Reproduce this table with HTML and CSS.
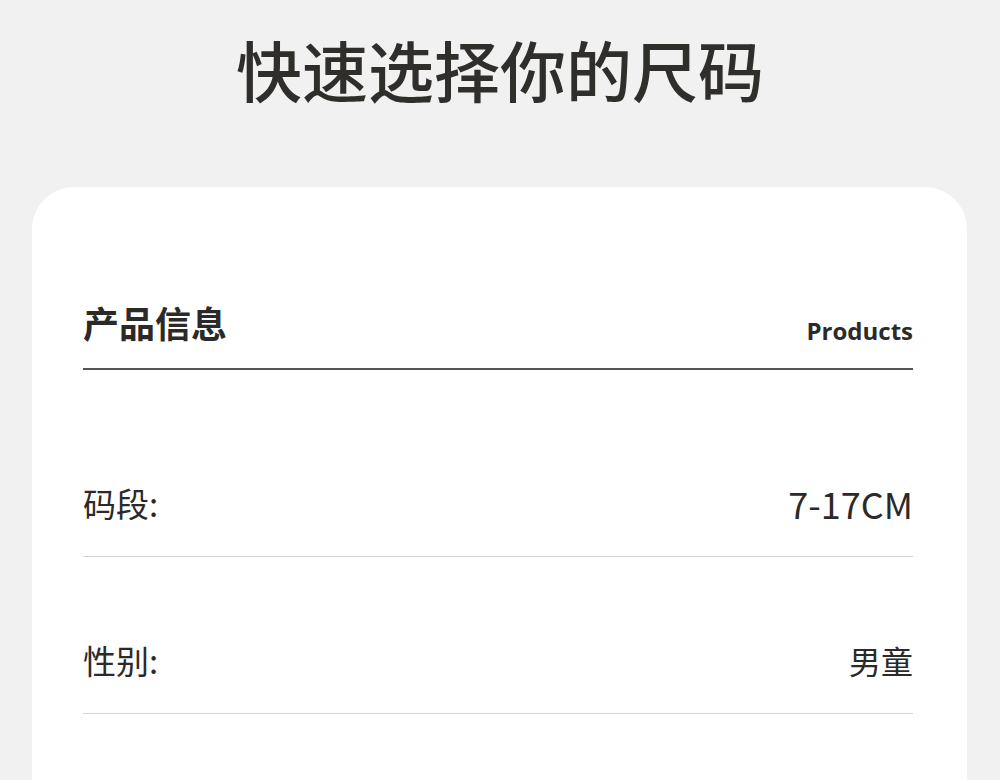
FILE: index.html
```html
<!DOCTYPE html>
<html lang="zh-CN">
<head>
<meta charset="utf-8">
<link rel="stylesheet" href="styles.css">
</head>
<body>
<h1 class="title">快速选择你的尺码</h1>
<section class="card">
  <div class="card-head">
    <h2 class="head-cn">产品信息</h2>
    <span class="head-en">Products</span>
  </div>
  <div class="rows">
    <div class="row">
      <span class="label">码段:</span>
      <span class="value value-latin">7-17CM</span>
    </div>
    <div class="row">
      <span class="label">性别:</span>
      <span class="value">男童</span>
    </div>
  </div>
</section>
</body>
</html>
```
FILE: styles.css
```css
html, body {
  margin: 0;
  padding: 0;
  background: #f1f1f1;
  height: 780px;
  overflow: hidden;
}
body {
  font-family: "Noto Sans CJK SC", "Noto Sans", sans-serif;
  color: #2b2a28;
}
.title {
  margin: 0;
  padding-top: 29px;
  text-align: center;
  font-size: 66px;
  font-weight: 500;
  line-height: 78px;
  color: #2f2e2b;
}
.card {
  margin: 80px 33px 0 32px;
  background: #ffffff;
  border-radius: 42px;
  padding: 109px 54px 0 51px;
  height: 800px;
}
.card-head {
  display: flex;
  justify-content: space-between;
  align-items: flex-end;
  border-bottom: 2px solid #555553;
  padding-bottom: 20px;
}
.head-cn {
  margin: 0;
  font-size: 36px;
  font-weight: 700;
  line-height: 52px;
}
.head-en {
  font-family: "Open Sans", "Noto Sans", sans-serif;
  font-size: 24px;
  font-weight: 700;
  line-height: 30px;
  padding-bottom: 2px;
}
.rows {
  padding-top: 30px;
}
.row {
  display: flex;
  justify-content: space-between;
  align-items: center;
  border-bottom: 1px solid #d6d6d6;
  padding: 80px 0 30px;
  line-height: 46px;
}
.label {
  font-size: 33px;
  font-weight: 400;
}
.value {
  font-size: 32px;
  font-weight: 400;
}
.value-latin {
  font-size: 36px;
}
```
